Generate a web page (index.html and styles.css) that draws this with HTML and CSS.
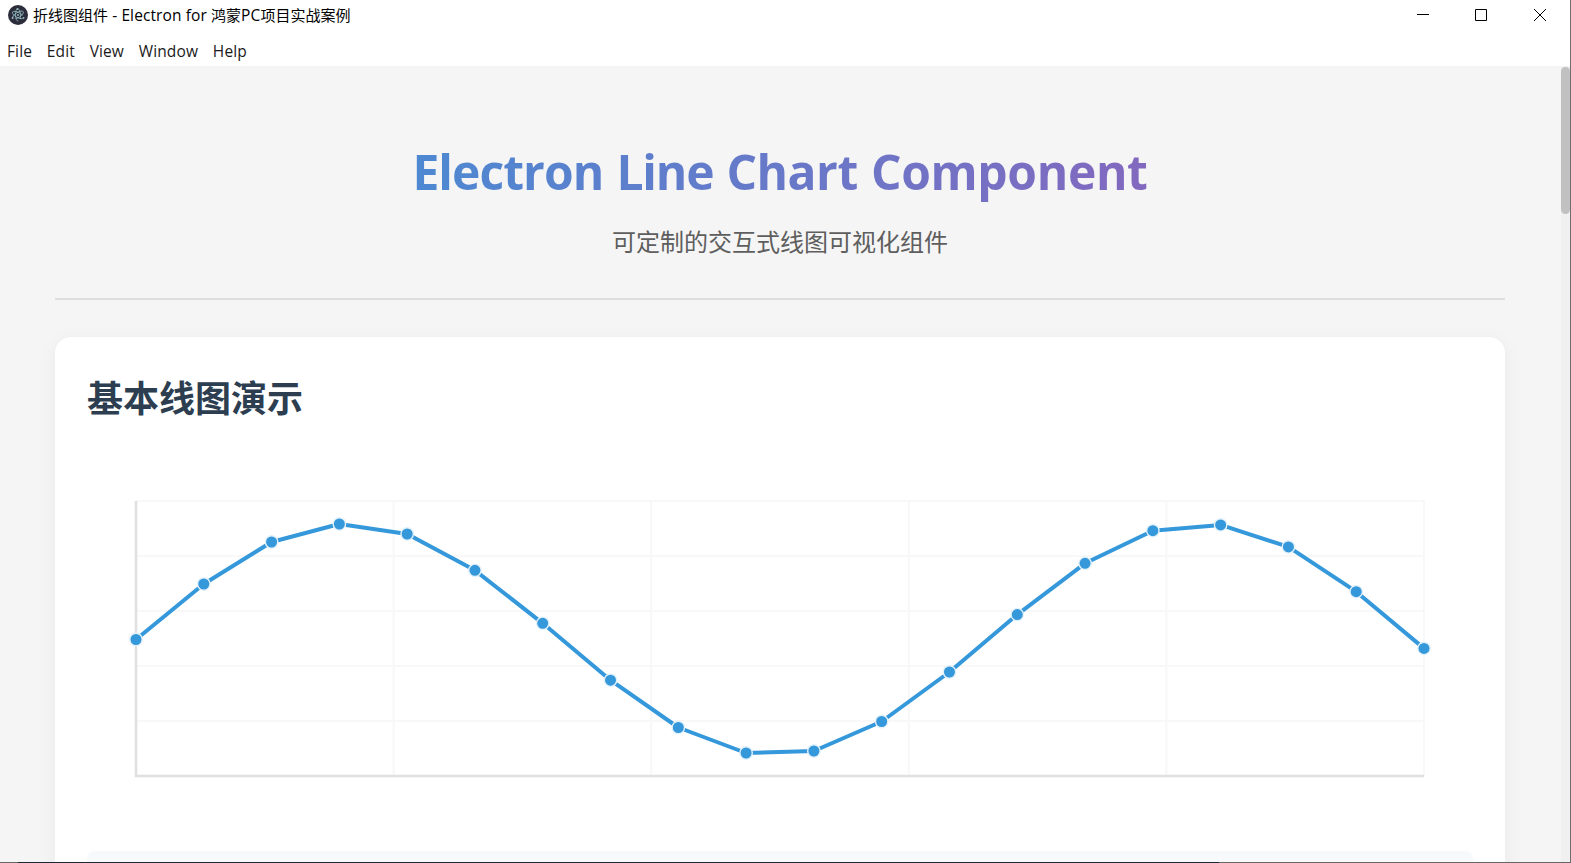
FILE: index.html
```html
<!DOCTYPE html>
<html lang="zh-CN">
<head>
<meta charset="utf-8">
<title>折线图组件 - Electron for 鸿蒙PC项目实战案例</title>
<link rel="stylesheet" href="styles.css">
</head>
<body>
<div class="window">
  <header class="titlebar">
    <svg class="app-icon" viewBox="0 0 20 20"><circle cx="10" cy="10" r="10" fill="#2b2e3a"/><g fill="none" stroke="#8fb6bf" stroke-width=".8"><ellipse cx="10" cy="10" rx="6.2" ry="2.5" transform="rotate(28 10 10)" stroke-dasharray="25 3"/><ellipse cx="10" cy="10" rx="6.2" ry="2.5" transform="rotate(88 10 10)" stroke-dasharray="25 3"/><ellipse cx="10" cy="10" rx="6.2" ry="2.5" transform="rotate(148 10 10)" stroke-dasharray="25 3"/></g><g fill="#9fc6cf"><circle cx="10" cy="10" r=".9"/><circle cx="4.6" cy="13" r=".9"/><circle cx="15.6" cy="12.8" r=".9"/><circle cx="9.4" cy="3.9" r=".9"/></g></svg>
    <span class="caption"><span>折线图组件</span><span class="cap-latin">&nbsp;- Electron for&nbsp;</span><span>鸿蒙</span><span class="cap-latin">PC</span><span>项目实战案例</span></span>
    <div class="controls">
      <svg viewBox="0 0 12 12"><path d="M0 5.5H12"/></svg>
      <svg viewBox="0 0 12 12"><path d="M.5.5H11.5V11.5H.5Z"/></svg>
      <svg viewBox="0 0 12 12"><path d="M0 0L12 12M12 0L0 12"/></svg>
    </div>
  </header>
  <nav class="menubar"><span>File</span><span>Edit</span><span>View</span><span>Window</span><span>Help</span></nav>
  <div class="viewport">
    <main class="page">
      <div class="hero">
        <h1><span class="w1">Electron</span> <span class="w2">Line</span> <span class="w3">Chart</span> <span class="w4">Component</span></h1>
        <p>可定制的交互式线图可视化组件</p>
      </div>
      <section class="card">
        <h2>基本线图演示</h2>
        <svg class="chart" viewBox="87 450 1386 376" id="chart"></svg>
        <div class="panel"></div>
      </section>
    </main>
    <div class="scroll"><div class="thumb"></div></div>
  </div>
  <div class="bottom-edge"></div>
</div>
<script src="chart.js"></script>
</body>
</html>
```
FILE: styles.css
```css
* { box-sizing: border-box; }
body { margin: 0; font-family: "Open Sans", "Noto Sans CJK SC", sans-serif; }
.window { width: 1571px; height: 863px; overflow: hidden; display: flex; flex-direction: column; background: #fff; border-right: 1px solid #6e6e6e; }
.titlebar { height: 36px; flex: none; display: flex; align-items: flex-start; padding: 5px 0 0 8px; color: #000; }
.app-icon { width: 20px; height: 20px; }
.caption { display: flex; margin-left: 5px; font-size: 15px; line-height: 21px; white-space: nowrap; }
.cap-latin { font-size: 15.5px; letter-spacing: .11px; }
.controls { margin: 4px 24px 0 auto; display: flex; gap: 46px; }
.controls svg { width: 12px; height: 12px; fill: none; stroke: #000; stroke-width: 1; overflow: visible; }
.controls svg:last-child { margin-left: 1px; }
.menubar { height: 30px; flex: none; display: flex; gap: 14.8px; padding: 3px 0 0 7px; font-size: 15.5px; letter-spacing: .12px; line-height: 24px; color: #1a1a1a; }
.viewport { flex: 1; min-height: 0; display: flex; background: #f5f5f5; overflow: hidden; }
.page { flex: 1; padding: 0 56px 0 55px; }
.hero { height: 234px; border-bottom: 2px solid #dedede; text-align: center; overflow: hidden; }
.hero h1 { margin: 72px 0 0; height: 68px; line-height: 68px; font-size: 48px; font-weight: 700; word-spacing: .7px; background: linear-gradient(90deg, #3498db, #9b59b6); background-clip: text; -webkit-background-clip: text; color: transparent; white-space: nowrap; }
.w1 { letter-spacing: -.95px; }
.w2 { letter-spacing: -1.2px; }
.w3 { letter-spacing: -.5px; }
.w4 { letter-spacing: -.35px; }
.hero p { margin: 18px 0 0; font-size: 24px; line-height: 36px; color: #5e5e5e; }
.card { margin-top: 37px; height: 700px; background: #fff; border-radius: 16px; padding: 33px 32px 32px; box-shadow: 0 4px 20px rgba(0,0,0,.05); }
.card h2 { margin: 0; font-size: 36px; line-height: 58px; font-weight: 700; color: #2c3e50; }
.chart { display: block; width: 1386px; height: 376px; margin-top: 22px; }
.panel { margin-top: 25px; height: 200px; border-radius: 8px; background: #f8f9fb; }
.scroll { width: 9px; background: #f0f0f0; padding-top: 1px; }
.thumb { height: 147px; border-radius: 5px; background: #c1c1c1; }
.bottom-edge { height: 1px; flex: none; background: linear-gradient(90deg, #666 0 18px, #1b2838 18px 1219px, #666 1219px); }
.grid { stroke: #f8f8f8; stroke-width: 2.2; fill: none; }
.axis { stroke: #e0e0e0; stroke-width: 2.6; fill: none; }
.series { stroke: #3498db; stroke-width: 4; fill: none; stroke-linejoin: round; }
.dot { fill: #3498db; stroke: #e3f1fa; stroke-width: 1.4; }
```
FILE: chart.js
```js
const left = 136, right = 1424, top0 = 501, bottom = 776;
const values = [639.5, 584, 542, 524, 534, 570.3, 623.3, 680.2, 727.5, 753, 751, 721.5, 672, 614.6, 563.3, 530.7, 524.9, 546.9, 591.7, 648.4];
let out = '';
for (let i = 0; i <= 5; i++) {
  const x = left + (right - left) * i / 5, y = top0 + (bottom - top0) * i / 5;
  out += `<path class="grid" d="M${x} ${top0}V${bottom}M${left} ${y}H${right}"/>`;
}
out += `<path class="axis" d="M${left} ${top0}V${bottom}H${right}"/>`;
const pts = values.map((y, i) => [left + (right - left) * i / (values.length - 1), y]);
out += `<polyline class="series" points="${pts.map(p => p.join(',')).join(' ')}"/>`;
for (const [x, y] of pts) out += `<circle class="dot" cx="${x}" cy="${y}" r="6.2"/>`;
document.getElementById('chart').innerHTML = out;
```
